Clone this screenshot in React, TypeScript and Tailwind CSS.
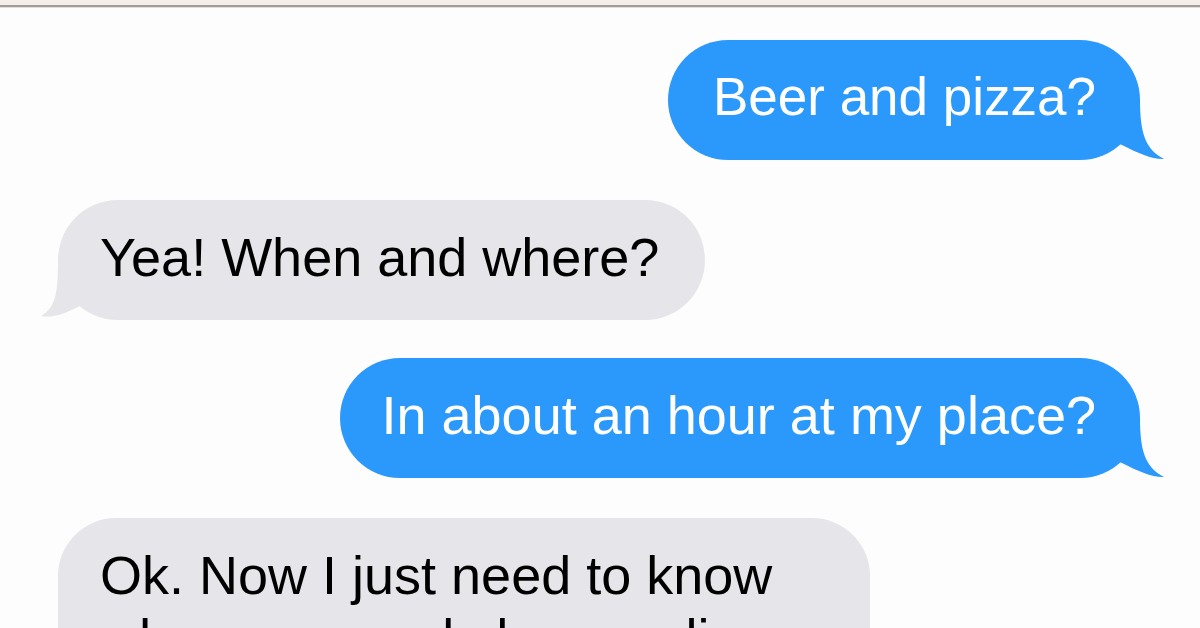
import React from "react";

function BlueTail() {
  return (
    <svg
      className="absolute right-[-25px] bottom-0 w-[65px] h-[61px] overflow-visible"
      viewBox="0 0 65 61"
    >
      <path
        d="M36,0 L40,0 C40,34 45,50 64,60 C52,60.5 38,54 24,47 C18,44 12,42 6,44 L6,0 Z"
        fill="#2b98fc"
      />
    </svg>
  );
}

function GrayTail() {
  return (
    <svg
      className="absolute left-[-21px] bottom-0 w-[60px] h-[61px] overflow-visible"
      viewBox="0 0 60 61"
    >
      <path
        d="M25,1 L21,1 C21,36 18,49 4,57 C16,59.5 29,54 41,48 C47,45 53,44 59,46 L59,1 Z"
        fill="#e6e5ea"
      />
    </svg>
  );
}

export default function App() {
  return (
    <div className="w-[1200px] h-[628px] overflow-hidden bg-[#fdfdfd] font-['Liberation_Sans',Arial,sans-serif]">
      <div className="h-[5px] bg-[#f3eeea]" />
      <div className="h-[2px] bg-[#a29c98]" />
      <div className="h-[1px] bg-[#e2deda]" />
      <div className="flex flex-col pt-[32px] pl-[58px] pr-[60px]">
        <div className="self-end relative">
          <div className="relative z-10 rounded-full bg-[#2b98fc] text-white text-[53px] leading-[62px] pl-[45px] pr-[44px] pt-[26px] pb-[32px] whitespace-nowrap">
            Beer and pizza?
          </div>
          <BlueTail />
        </div>

        <div className="self-start relative mt-[40px]">
          <div className="relative z-10 rounded-full bg-[#e6e5ea] text-black text-[54px] leading-[62px] pl-[42px] pr-[46px] pt-[26px] pb-[32px] whitespace-nowrap">
            Yea! When and where?
          </div>
          <GrayTail />
        </div>

        <div className="self-end relative mt-[38px]">
          <div className="relative z-10 rounded-full bg-[#2b98fc] text-white text-[54px] leading-[62px] pl-[42px] pr-[44px] pt-[26px] pb-[32px] whitespace-nowrap">
            In about an hour at my place?
          </div>
          <BlueTail />
        </div>

        <div className="self-start relative mt-[40px]">
          <div className="w-[812px] rounded-[58px] bg-[#e6e5ea] text-black text-[54px] leading-[63px] pl-[42px] pr-[40px] pt-[26px] pb-[32px]">
            Ok. Now I just need to know where you and she now live (so I can bring it over)
          </div>
        </div>
      </div>
    </div>
  );
}
